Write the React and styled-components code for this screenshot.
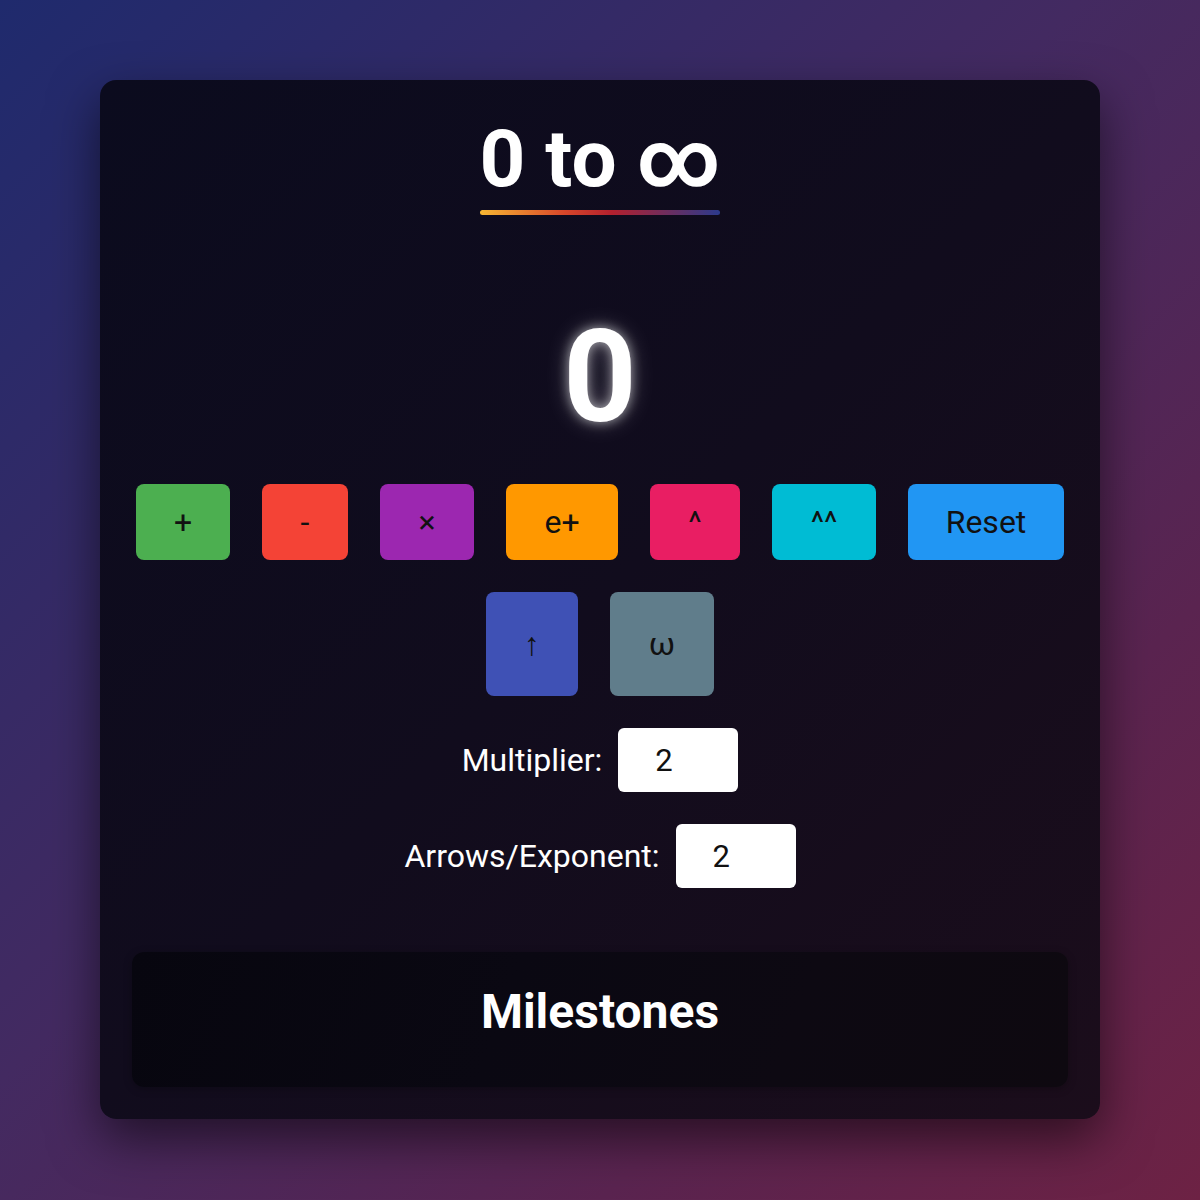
import styled, { createGlobalStyle } from 'styled-components';

const GlobalStyle = createGlobalStyle`
  html, body {
    margin: 0;
    padding: 0;
  }
  body {
    font-family: Roboto, "Liberation Sans", sans-serif;
    background: linear-gradient(135deg, #1f2a6d 0%, #432a61 45%, #5a2450 75%, #6d2244 100%);
    min-height: 1200px;
  }
`;

const operations = [
  { label: '+', width: 94, color: '#4caf50' },
  { label: '-', width: 86, color: '#f44336' },
  { label: '×', width: 94, color: '#9c27b0' },
  { label: 'e+', width: 112, color: '#ff9800' },
  { label: '^', width: 90, color: '#e91e63' },
  { label: '^^', width: 104, color: '#00bcd4' },
  { label: 'Reset', width: 156, color: '#2196f3' },
];

const bigOperations = [
  { label: '↑', width: 92, color: '#3f51b5' },
  { label: 'ω', width: 104, color: '#607d8b' },
];

export default function App() {
  return (
    <>
      <GlobalStyle />
      <Page>
        <Card>
          <Title>0 to ∞</Title>
          <Counter>0</Counter>
          <ButtonRow>
            {operations.map((op) => (
              <OpButton key={op.label} $color={op.color} $width={op.width}>
                {op.label}
              </OpButton>
            ))}
          </ButtonRow>
          <ButtonRow>
            {bigOperations.map((op) => (
              <OpButton key={op.label} $color={op.color} $width={op.width} $tall>
                {op.label}
              </OpButton>
            ))}
          </ButtonRow>
          <Field>
            <Label>Multiplier:</Label>
            <NumberInput type="number" defaultValue={2} />
          </Field>
          <Field>
            <Label>Arrows/Exponent:</Label>
            <NumberInput type="number" defaultValue={2} />
          </Field>
          <Milestones>
            <MilestonesTitle>Milestones</MilestonesTitle>
          </Milestones>
        </Card>
      </Page>
    </>
  );
}

const Page = styled.div`
  padding: 80px 100px;
  display: flex;
  justify-content: center;
`;

const Card = styled.div`
  width: 100%;
  box-sizing: border-box;
  padding: 32px;
  border-radius: 16px;
  background: linear-gradient(135deg, #0b0b1e 0%, #110c1d 50%, #1b0d1b 100%);
  box-shadow: 0 20px 50px rgba(0, 0, 0, 0.55);
  display: flex;
  flex-direction: column;
  align-items: center;
`;

const Title = styled.h1`
  margin: 0;
  display: inline-block;
  color: #fff;
  font-size: 80px;
  font-weight: 700;
  line-height: 95px;
  &::after {
    content: '';
    display: block;
    height: 5px;
    margin-top: 3px;
    border-radius: 3px;
    background: linear-gradient(90deg, #f7b733 0%, #d8472a 35%, #b3202e 55%, #2b3a8c 100%);
  }
`;

const Counter = styled.div`
  margin-top: 87px;
  color: #fff;
  font-size: 128px;
  font-weight: 700;
  line-height: 150px;
  text-shadow: 0 0 12px rgba(255, 255, 255, 0.6), 0 0 24px rgba(255, 255, 255, 0.25);
`;

const ButtonRow = styled.div`
  margin-top: 32px;
  display: flex;
  justify-content: center;
  gap: 32px;
`;

const OpButton = styled.button`
  width: ${(p) => p.$width}px;
  height: ${(p) => (p.$tall ? 104 : 76)}px;
  border: none;
  border-radius: 8px;
  background: ${(p) => p.$color};
  color: #111;
  font-family: Roboto, "Liberation Sans", sans-serif;
  font-size: 32px;
  padding: 0;
  cursor: pointer;
`;

const Field = styled.div`
  margin-top: 32px;
  display: flex;
  align-items: center;
  gap: 16px;
`;

const Label = styled.label`
  color: #fff;
  font-size: 32px;
`;

const NumberInput = styled.input`
  width: 120px;
  height: 64px;
  box-sizing: border-box;
  border: none;
  border-radius: 6px;
  background: #fff;
  color: #111;
  padding: 0 0 0 37px;
  font-family: Roboto, "Liberation Sans", sans-serif;
  font-size: 31px;
  outline: none;
  -moz-appearance: textfield;
  &::-webkit-inner-spin-button,
  &::-webkit-outer-spin-button {
    -webkit-appearance: none;
    margin: 0;
  }
`;

const Milestones = styled.div`
  margin-top: 64px;
  align-self: stretch;
  box-sizing: border-box;
  height: 135px;
  padding-top: 32px;
  border-radius: 12px;
  background: linear-gradient(110deg, #07060f 0%, #0a0812 40%, #0d0912 70%, #0e0910 100%);
  box-shadow: 0 2px 8px rgba(0, 0, 0, 0.25);
  text-align: center;
`;

const MilestonesTitle = styled.h2`
  margin: 0;
  color: #fff;
  font-size: 48px;
  font-weight: 700;
  line-height: 56px;
`;
